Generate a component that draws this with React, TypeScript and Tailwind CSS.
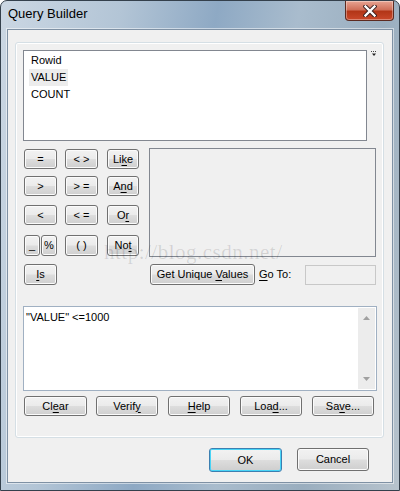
import React from 'react';

const btnCls =
  'flex items-center justify-center rounded-[3px] border border-[#707070] bg-[linear-gradient(to_bottom,#f2f2f2_0%,#ebebeb_48%,#dddddd_52%,#cfcfcf_100%)] shadow-[inset_0_0_0_1px_#fbfbfb] text-[11px] text-black leading-none';

const Btn: React.FC<{ className?: string; children: React.ReactNode }> = ({ className = '', children }) => (
  <div className={`${btnCls} ${className}`}>
    <span className="whitespace-pre">{children}</span>
  </div>
);

const U: React.FC<{ children: React.ReactNode }> = ({ children }) => (
  <span className="underline underline-offset-[2px]">{children}</span>
);

const CloseIcon = () => (
  <svg width="14" height="12" viewBox="0 0 14 12">
    <path d="M2.5 1.5 L11.5 10.5 M11.5 1.5 L2.5 10.5" stroke="#3a2020" strokeWidth="4.2" strokeLinecap="square" />
    <path d="M2.5 1.5 L11.5 10.5 M11.5 1.5 L2.5 10.5" stroke="#ffffff" strokeWidth="2.4" strokeLinecap="square" />
  </svg>
);

const ListMenuIcon = () => (
  <svg width="6" height="6" viewBox="0 0 6 6">
    <path d="M0 0.5 H6" stroke="#444" strokeWidth="1" strokeDasharray="1 1" />
    <path d="M1 2.5 L5 2.5 L3 5 Z" fill="#222" />
  </svg>
);

const App: React.FC = () => {
  const fields = ['Rowid', 'VALUE', 'COUNT'];

  return (
    <div
      className="relative w-[400px] h-[491px] overflow-hidden rounded-t-[7px] border border-[#34404c] bg-[linear-gradient(100deg,#cbd7e3_0%,#b3c5d6_25%,#8ea9c4_45%,#a9bccd_62%,#9aaebf_80%,#b7c3cd_100%)] flex flex-col"
      style={{ fontFamily: '"Liberation Sans", Arial, sans-serif' }}
    >
      {/* title bar */}
      <div className="h-[28px] flex items-start justify-between">
        <div className="pl-[7px] pt-[6px] text-[13px] text-black leading-none">Query Builder</div>
        <div className="mr-[5px] w-[49px] h-[20px] rounded-b-[4px] border border-t-0 border-[#5c2a20] bg-[linear-gradient(to_bottom,#e8a493_0%,#d0705a_45%,#b33617_55%,#c9482a_100%)] flex items-center justify-center shadow-[inset_0_0_0_1px_rgba(255,255,255,0.35)]">
          <CloseIcon />
        </div>
      </div>

      {/* client area */}
      <div className="ml-[6px] w-[386px] h-[454px] border border-[#7f91a4] bg-[#f0f0f0] shadow-[0_0_0_1px_rgba(255,255,255,0.5)]">
        {/* group box */}
        <div className="ml-[7px] mt-[12px] w-[369px] h-[396px] rounded-[3px] border border-[#d5dfe5] shadow-[inset_0_0_0_1px_#ffffff] pl-[7px] pt-[7px]">
          {/* field list */}
          <div className="flex items-start">
            <div className="w-[344px] h-[91px] border border-[#828790] bg-white pt-[1px] pl-[5px]">
              {fields.map((f) => (
                <div key={f} className="h-[17px] flex items-center">
                  <span className={`px-[2px] h-[17px] leading-[17px] text-[11px] text-black ${f === 'VALUE' ? 'bg-[#ececec]' : ''}`}>
                    {f}
                  </span>
                </div>
              ))}
            </div>
            <div className="ml-[4px] mt-[1px]">
              <ListMenuIcon />
            </div>
          </div>

          {/* operators + values */}
          <div className="flex mt-[7px]">
            <div className="ml-[1px] mt-[1px] flex flex-col">
              <div className="flex">
                <Btn className="w-[33px] h-[20px]">=</Btn>
                <Btn className="ml-[8px] w-[33px] h-[20px]">&lt; &gt;</Btn>
                <Btn className="ml-[9px] w-[32px] h-[20px]">
                  Li<U>k</U>e
                </Btn>
              </div>
              <div className="flex mt-[7px]">
                <Btn className="w-[33px] h-[20px]">&gt;</Btn>
                <Btn className="ml-[8px] w-[33px] h-[20px]">&gt; =</Btn>
                <Btn className="ml-[9px] w-[32px] h-[20px]">
                  A<U>n</U>d
                </Btn>
              </div>
              <div className="flex mt-[9px]">
                <Btn className="w-[33px] h-[20px]">&lt;</Btn>
                <Btn className="ml-[8px] w-[33px] h-[20px]">&lt; =</Btn>
                <Btn className="ml-[9px] w-[32px] h-[20px]">
                  O<U>r</U>
                </Btn>
              </div>
              <div className="flex mt-[10px]">
                <Btn className="w-[16px] h-[21px]">_</Btn>
                <Btn className="ml-[1px] w-[16px] h-[21px]">%</Btn>
                <Btn className="ml-[8px] w-[33px] h-[21px]">( )</Btn>
                <Btn className="ml-[9px] w-[32px] h-[21px]">
                  No<U>t</U>
                </Btn>
              </div>
              <div className="flex mt-[8px]">
                <Btn className="w-[33px] h-[21px]">
                  <U>I</U>s
                </Btn>
              </div>
            </div>

            <div className="ml-[10px] flex flex-col">
              <div className="w-[227px] h-[109px] border border-[#828790] bg-[#f0f0f0]" />
              <div className="flex items-center mt-[7px]">
                <Btn className="ml-[1px] w-[105px] h-[21px]">
                  {'Get Unique '}
                  <U>V</U>alues
                </Btn>
                <span className="ml-[4px] text-[11px] text-black">
                  <U>G</U>o To:
                </span>
                <div className="ml-auto w-[71px] h-[20px] border border-[#c8c8c8] bg-[#f0f0f0]" />
              </div>
            </div>
          </div>

          {/* expression */}
          <div className="mt-[21px] w-[354px] h-[85px] border border-[#a0b0c2] bg-white flex">
            <div className="flex-1 pl-[2px] pt-[5px] text-[11px] text-black leading-none">"VALUE" &lt;=1000</div>
            <div className="w-[17px] mr-[1px] my-[1px] bg-[#ececec] flex flex-col items-center justify-between py-[8px]">
              <svg width="7" height="4" viewBox="0 0 7 4">
                <path d="M0 4 L3.5 0 L7 4 Z" fill="#a0a0a0" />
              </svg>
              <svg width="7" height="4" viewBox="0 0 7 4">
                <path d="M0 0 L7 0 L3.5 4 Z" fill="#a0a0a0" />
              </svg>
            </div>
          </div>

          {/* action buttons */}
          <div className="flex mt-[5px] ml-[1px]">
            <Btn className="w-[63px] h-[20px]">
              Cl<U>e</U>ar
            </Btn>
            <Btn className="ml-[9px] w-[62px] h-[20px]">
              Verif<U>y</U>
            </Btn>
            <Btn className="ml-[10px] w-[62px] h-[20px]">
              <U>H</U>elp
            </Btn>
            <Btn className="ml-[10px] w-[62px] h-[20px]">
              Loa<U>d</U>...
            </Btn>
            <Btn className="ml-[10px] w-[62px] h-[20px]">
              Sa<U>v</U>e...
            </Btn>
          </div>
        </div>

        {/* OK / Cancel */}
        <div className="flex mt-[10px] ml-[201px]">
          <div className="w-[73px] h-[24px] rounded-[3px] border border-[#3c7fb1] bg-[linear-gradient(to_bottom,#eaf6fd_0%,#d9f0fc_48%,#bee6fd_52%,#a7d9f5_100%)] shadow-[inset_0_0_0_1px_#48d4f6] p-[1px]">
            <div className="w-full h-full rounded-[2px] bg-[linear-gradient(to_bottom,#f2f2f2_0%,#ebebeb_48%,#dddddd_52%,#cfcfcf_100%)] flex items-center justify-center text-[11px] text-black">
              OK
            </div>
          </div>
          <Btn className="ml-[15px] w-[72px] h-[23px]">Cancel</Btn>
        </div>
      </div>

      {/* watermark */}
      <div
        className="absolute left-[103px] top-[241px] text-[21px] text-[rgba(0,0,0,0.12)] tracking-[0.5px] pointer-events-none leading-none"
        style={{ fontFamily: '"Liberation Serif", "Times New Roman", serif' }}
      >
        http://blog.csdn.net/
      </div>
    </div>
  );
};

export default App;
